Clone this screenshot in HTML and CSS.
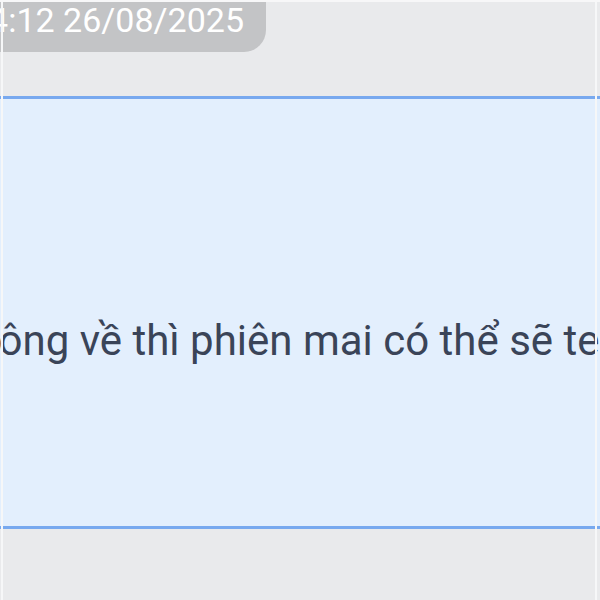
FILE: index.html
```html
<!DOCTYPE html>
<html>
	<head>
		<meta charset="UTF-8">
		<title></title>
		<link rel="stylesheet" href="styles.css">
	</head>
	<body>
		<div class="screen">
			<div class="time">14:12 26/08/2025</div>
			<div class="msg">
				<p class="msg-text">Không về thì phiên mai có thể sẽ test lại</p>
			</div>
			<div class="edge edge-l"></div>
			<div class="edge edge-r"></div>
		</div>
	</body>
</html>
```
FILE: styles.css
```css
html, body{
	margin: 0;
	padding: 0;
}
body{
	width: 600px;
	height: 600px;
	overflow: hidden;
	background: #ffffff;
}
.screen{
	position: relative;
	width: 600px;
	height: 600px;
	overflow: hidden;
	background: #e9eaec;
	border-top: 2px solid #f7f7f8;
	box-sizing: border-box;
}
.time{
	display: inline-block;
	margin: -2px 0 0 -30px;
	padding: 0 22px 0 0;
	height: 52px;
	line-height: 40px;
	background: #c3c4c6;
	color: #ffffff;
	font-family: Roboto, "Liberation Sans", sans-serif;
	font-size: 34px;
	border-radius: 0 0 22px 0;
	white-space: nowrap;
}
.msg{
	margin-top: 44px;
	height: 427px;
	background: #e3effd;
	border-top: 3px solid #78a9ef;
	border-bottom: 3px solid #78a9ef;
	display: flex;
	align-items: center;
	overflow: hidden;
}
.msg-text{
	margin: 56px 0 0 -51px;
	white-space: nowrap;
	font-family: Roboto, "Open Sans", sans-serif;
	font-size: 42px;
	color: #3a4458;
}
.edge{
	position: absolute;
	top: 0;
	bottom: 0;
	width: 2px;
	background: #f6f7f8;
}
.edge-l{
	left: 1px;
}
.edge-r{
	left: 595px;
}
```
